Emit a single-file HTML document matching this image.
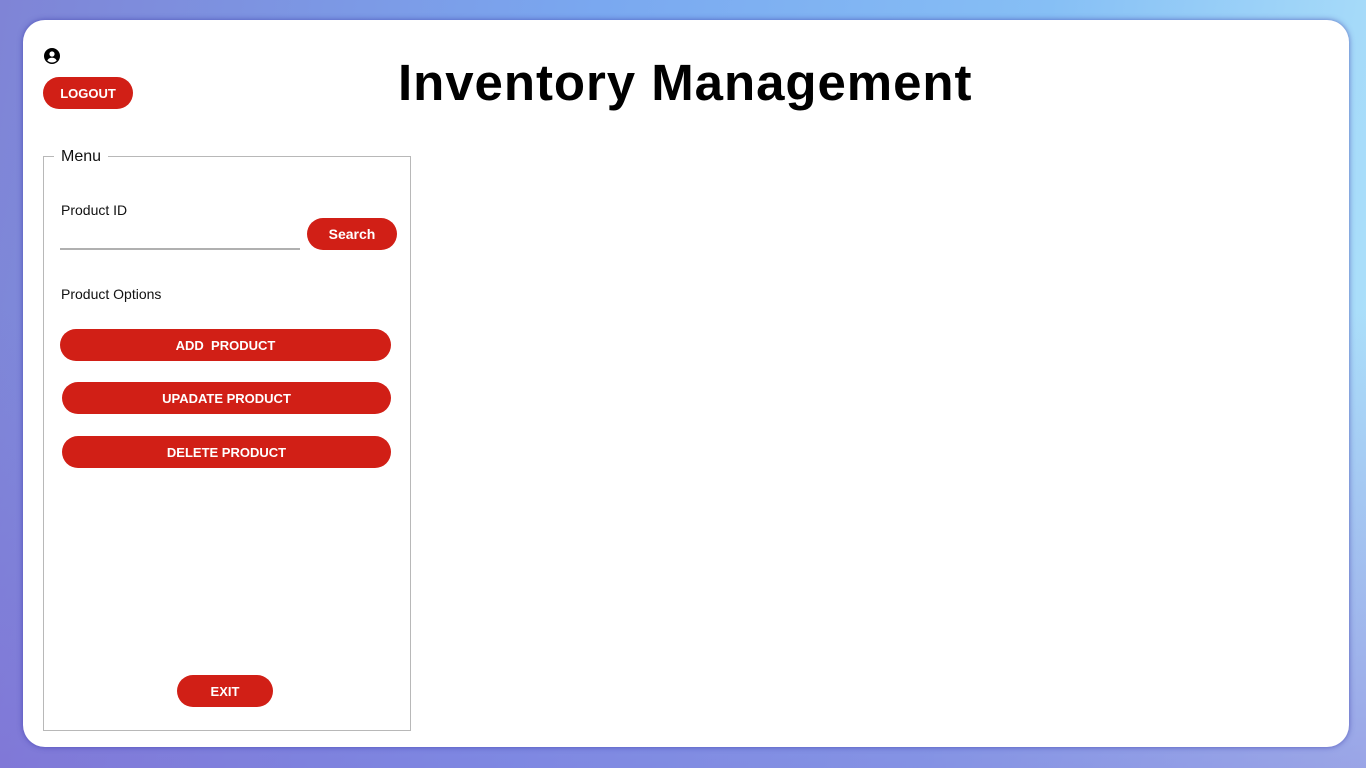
<!DOCTYPE html>
<html><head><meta charset="utf-8"><style>
html,body{margin:0;padding:0;width:1366px;height:768px;overflow:hidden;font-family:"Liberation Sans",sans-serif}
body{background:linear-gradient(100deg,#7f84d6 0%,#7aa8f0 40%,#86bff5 70%,#b3e6fb 100%);position:relative}
.bg2{position:absolute;inset:0;background:linear-gradient(180deg,rgba(0,0,0,0) 40%,rgba(130,100,210,.5) 100%)}
.card{position:absolute;left:23px;top:20px;width:1326px;height:727px;background:#fff;border-radius:22px;box-shadow:0 0 6px rgba(60,60,170,.7)}
.a{position:absolute}
.btn{position:absolute;background:#d11f16;color:#fff;font-weight:bold;font-size:13px;border-radius:16px;display:flex;align-items:center;justify-content:center}
</style></head><body><div class="bg2"></div>
<div class="card"></div>
<svg class="a" style="left:44px;top:48px" width="16" height="16" viewBox="0 0 16 16"><circle cx="8" cy="8" r="8" fill="#000"/><circle cx="8" cy="6" r="2.6" fill="#fff"/><path d="M3.3 12.6c1-2 2.7-2.8 4.7-2.8s3.7.8 4.7 2.8c-1.2 1.2-2.9 1.9-4.7 1.9s-3.5-.7-4.7-1.9z" fill="#fff"/></svg>
<div class="btn" style="left:43px;top:77px;width:90px;height:32px">LOGOUT</div>
<div class="a" style="left:398px;top:53px;width:580px;font-size:51px;font-weight:bold;white-space:nowrap;letter-spacing:0.95px">Inventory Management</div>
<div class="a" style="left:43px;top:156px;width:366px;height:573px;border:1.5px solid #b8b8b8"></div>
<div class="a" style="left:54px;top:148px;background:#fff;padding:0 7px;font-size:16px;color:#111">Menu</div>
<div class="a" style="left:61px;top:202px;font-size:14px;color:#111">Product ID</div>
<div class="a" style="left:60px;top:248px;width:240px;height:2px;background:#b0b0b0"></div>
<div class="btn" style="left:307px;top:218px;width:90px;height:32px;font-size:14px">Search</div>
<div class="a" style="left:61px;top:286px;font-size:14px;color:#111">Product Options</div>
<div class="btn" style="left:60px;top:329px;width:331px;height:32px">ADD&nbsp; PRODUCT</div>
<div class="btn" style="left:62px;top:382px;width:329px;height:32px">UPADATE PRODUCT</div>
<div class="btn" style="left:62px;top:436px;width:329px;height:32px">DELETE PRODUCT</div>
<div class="btn" style="left:177px;top:675px;width:96px;height:32px">EXIT</div>
</body></html>
